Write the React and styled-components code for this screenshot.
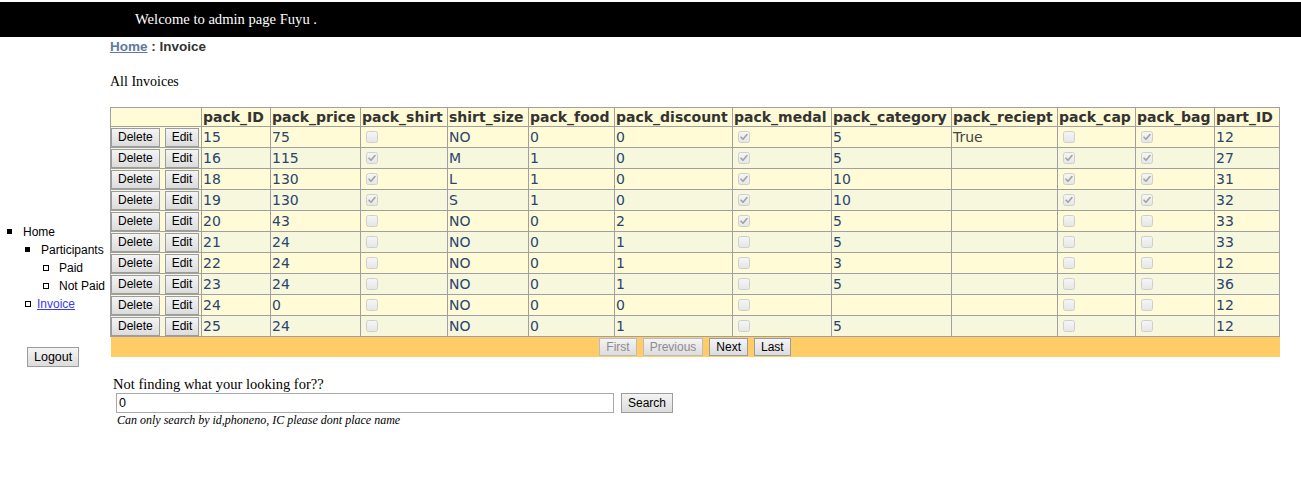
import React from "react";
import styled, { createGlobalStyle } from "styled-components";

const GlobalStyle = createGlobalStyle`
  body {
    margin: 0;
    background: #fff;
    font-family: "Liberation Serif", "Times New Roman", serif;
  }
`;

const TopBar = styled.div`
  margin-top: 2px;
  height: 35px;
  background: #000;
  color: #fff;
  font-size: 14.6px;
  line-height: 35px;
  padding-left: 135px;
`;

const Body = styled.div`
  display: flex;
  align-items: flex-start;
`;

const Side = styled.div`
  width: 110px;
  flex-shrink: 0;
  padding-top: 186px;
  font-family: "Liberation Sans", Arial, sans-serif;
  font-size: 12px;
`;

const MenuList = styled.ul`
  list-style: none;
  margin: 0;
  padding: 0;
`;

const MenuItem = styled.li`
  position: relative;
  height: 18px;
  line-height: 18px;
  padding-left: ${(p) => p.$text}px;
  color: #000;
  &::before {
    content: "";
    position: absolute;
    left: ${(p) => p.$bullet}px;
    top: 6px;
    width: ${(p) => (p.$hollow ? 4 : 5)}px;
    height: ${(p) => (p.$hollow ? 4 : 5)}px;
    background: ${(p) => (p.$hollow ? "#fff" : "#000")};
    border: ${(p) => (p.$hollow ? "1px solid #000" : "none")};
  }
  a {
    color: #3b3bf0;
    text-decoration: underline;
  }
`;

const Btn = styled.button`
  font-family: "Liberation Sans", Arial, sans-serif;
  font-size: 12px;
  height: ${(p) => p.$h || 19}px;
  padding: 0 6px;
  margin: 0;
  border: 1px solid ${(p) => (p.disabled ? "#bcbcbc" : "#9c9c9c")};
  border-radius: 0;
  background: linear-gradient(#f4f4f4, #dcdcdc);
  color: ${(p) => (p.disabled ? "#8c8c8c" : "#000")};
  vertical-align: middle;
  cursor: default;
`;

const LogoutBtn = styled(Btn)`
  margin: 34px 0 0 27px;
  height: 20px;
  font-size: 12.5px;
`;

const Main = styled.div`
  display: flex;
  flex-direction: column;
`;

const Crumb = styled.div`
  margin-top: 2px;
  font-family: "Liberation Sans", Arial, sans-serif;
  font-weight: bold;
  font-size: 13.5px;
  line-height: 16px;
  color: #333;
  a {
    color: #5d7b9d;
    text-decoration: underline;
  }
`;

const Heading = styled.div`
  margin-top: 18px;
  font-size: 14px;
  line-height: 18px;
`;

const Grid = styled.table`
  margin-top: 16px;
  border-collapse: collapse;
  table-layout: fixed;
  width: 1169px;
  font-family: "DejaVu Sans", Verdana, sans-serif;
  font-size: 14px;
`;

const Th = styled.th`
  background: #fffbd6;
  border: 1px solid #a0a0a0;
  color: #333;
  font-weight: bold;
  text-align: left;
  padding: 0 0 0 1px;
  height: 18px;
  line-height: 18px;
  white-space: nowrap;
  overflow: hidden;
`;

const Tr = styled.tr`
  background: ${(p) => (p.$alt ? "#f7f7de" : "#fffbd6")};
`;

const Td = styled.td`
  border: 1px solid #a0a0a0;
  color: ${(p) => (p.$plain ? "#444" : "#284570")};
  padding: 0 0 0 1px;
  height: 20px;
  line-height: 20px;
  white-space: nowrap;
  overflow: hidden;
`;

const ActionCell = styled.td`
  border: 1px solid #a0a0a0;
  padding: 0;
  height: 20px;
  white-space: nowrap;
  button + button {
    margin-left: 5px;
  }
`;

const BoxCell = styled(Td)`
  padding-left: 5px;
  line-height: 0;
`;

const PagerRow = styled.tr`
  background: #ffcc66;
`;

const PagerCell = styled.td`
  padding: 0;
  height: 20px;
  text-align: center;
  button + button {
    margin-left: 6px;
  }
`;

const SearchBlock = styled.div`
  margin: 19px 0 0 3px;
`;

const SearchLabel = styled.div`
  font-size: 14.5px;
  line-height: 17px;
`;

const SearchRow = styled.div`
  display: flex;
  align-items: center;
  gap: 7px;
  margin: 0 0 0 3px;
`;

const SearchInput = styled.input`
  width: 498px;
  height: 20px;
  box-sizing: border-box;
  border: 1px solid #a9a9a9;
  padding: 0 2px;
  font-family: "Liberation Sans", Arial, sans-serif;
  font-size: 12.5px;
  outline: none;
`;

const Hint = styled.div`
  margin: 0 0 0 4px;
  font-style: italic;
  font-size: 12px;
  line-height: 15px;
`;

const Check = ({ on }) => (
  <svg width="12" height="12" viewBox="0 0 12 12" style={{ verticalAlign: "middle" }}>
    <defs>
      <linearGradient id="cbg" x1="0" y1="0" x2="0" y2="1">
        <stop offset="0" stopColor="#f6f6f6" />
        <stop offset="1" stopColor="#e6e6e6" />
      </linearGradient>
    </defs>
    <rect x="0.5" y="0.5" width="11" height="11" rx="2" fill="url(#cbg)" stroke="#cfcfcf" />
    {on && (
      <path d="M3 6.2 L5 8.2 L9 3.6" fill="none" stroke="#a2a2a2" strokeWidth="1.6" strokeLinecap="round" strokeLinejoin="round" />
    )}
  </svg>
);

const columns = [
  ["", 91],
  ["pack_ID", 69],
  ["pack_price", 90],
  ["pack_shirt", 87],
  ["shirt_size", 81],
  ["pack_food", 86],
  ["pack_discount", 118],
  ["pack_medal", 99],
  ["pack_category", 120],
  ["pack_reciept", 106],
  ["pack_cap", 78],
  ["pack_bag", 79],
  ["part_ID", 65],
];

const invoices = [
  [15, 75, false, "NO", 0, 0, true, "5", "True", false, true, 12],
  [16, 115, true, "M", 1, 0, true, "5", "", true, true, 27],
  [18, 130, true, "L", 1, 0, true, "10", "", true, true, 31],
  [19, 130, true, "S", 1, 0, true, "10", "", true, true, 32],
  [20, 43, false, "NO", 0, 2, true, "5", "", false, false, 33],
  [21, 24, false, "NO", 0, 1, false, "5", "", false, false, 33],
  [22, 24, false, "NO", 0, 1, false, "3", "", false, false, 12],
  [23, 24, false, "NO", 0, 1, false, "5", "", false, false, 36],
  [24, 0, false, "NO", 0, 0, false, "", "", false, false, 12],
  [25, 24, false, "NO", 0, 1, false, "5", "", false, false, 12],
];

const App = () => {
  return (
    <>
      <GlobalStyle />
      <TopBar>Welcome to admin page Fuyu .</TopBar>
      <Body>
        <Side>
          <MenuList>
            <MenuItem $bullet={7} $text={23}>Home</MenuItem>
            <MenuItem $bullet={25} $text={41}>Participants</MenuItem>
            <MenuItem $bullet={43} $text={59} $hollow>Paid</MenuItem>
            <MenuItem $bullet={43} $text={59} $hollow>Not Paid</MenuItem>
            <MenuItem $bullet={25} $text={37} $hollow>
              <a href="#">Invoice</a>
            </MenuItem>
          </MenuList>
          <LogoutBtn>Logout</LogoutBtn>
        </Side>
        <Main>
          <Crumb>
            <a href="#">Home</a> : Invoice
          </Crumb>
          <Heading>All Invoices</Heading>
          <Grid>
            <colgroup>
              {columns.map(([name, w]) => (
                <col key={name || "act"} style={{ width: w }} />
              ))}
            </colgroup>
            <thead>
              <tr>
                {columns.map(([name]) => (
                  <Th key={name || "act"}>{name}</Th>
                ))}
              </tr>
            </thead>
            <tbody>
              {invoices.map((r, i) => (
                <Tr key={r[0]} $alt={i % 2 === 1}>
                  <ActionCell>
                    <Btn>Delete</Btn>
                    <Btn>Edit</Btn>
                  </ActionCell>
                  <Td>{r[0]}</Td>
                  <Td>{r[1]}</Td>
                  <BoxCell><Check on={r[2]} /></BoxCell>
                  <Td>{r[3]}</Td>
                  <Td>{r[4]}</Td>
                  <Td>{r[5]}</Td>
                  <BoxCell><Check on={r[6]} /></BoxCell>
                  <Td>{r[7]}</Td>
                  <Td $plain>{r[8]}</Td>
                  <BoxCell><Check on={r[9]} /></BoxCell>
                  <BoxCell><Check on={r[10]} /></BoxCell>
                  <Td>{r[11]}</Td>
                </Tr>
              ))}
              <PagerRow>
                <PagerCell colSpan={13}>
                  <Btn $h={18} disabled>First</Btn>
                  <Btn $h={18} disabled>Previous</Btn>
                  <Btn $h={18}>Next</Btn>
                  <Btn $h={18}>Last</Btn>
                </PagerCell>
              </PagerRow>
            </tbody>
          </Grid>
          <SearchBlock>
            <SearchLabel>Not finding what your looking for??</SearchLabel>
            <SearchRow>
              <SearchInput defaultValue="0" />
              <Btn $h={20}>Search</Btn>
            </SearchRow>
            <Hint>Can only search by id,phoneno, IC please dont place name</Hint>
          </SearchBlock>
        </Main>
      </Body>
    </>
  );
};

export default App;
